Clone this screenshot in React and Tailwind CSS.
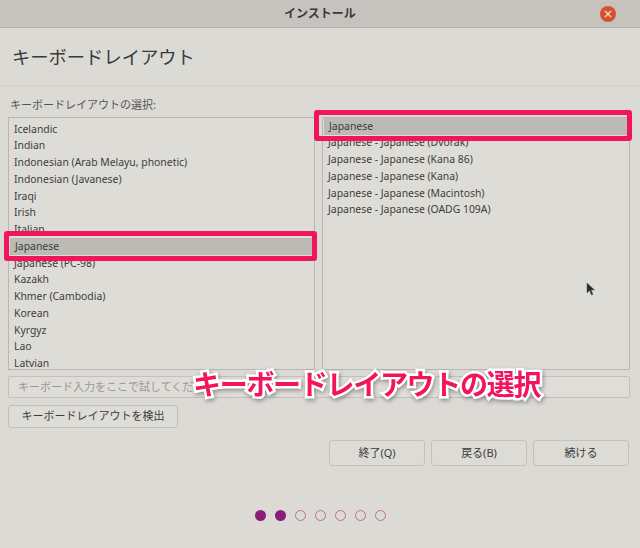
import React from "react";

const leftItems = [
  "Icelandic",
  "Indian",
  "Indonesian (Arab Melayu, phonetic)",
  "Indonesian (Javanese)",
  "Iraqi",
  "Irish",
  "Italian",
  "Japanese",
  "Japanese (PC-98)",
  "Kazakh",
  "Khmer (Cambodia)",
  "Korean",
  "Kyrgyz",
  "Lao",
  "Latvian",
];

const rightItems = [
  "Japanese",
  "Japanese - Japanese (Dvorak)",
  "Japanese - Japanese (Kana 86)",
  "Japanese - Japanese (Kana)",
  "Japanese - Japanese (Macintosh)",
  "Japanese - Japanese (OADG 109A)",
];

function ListBox({ items, selected, className }) {
  return (
    <div className={"h-[253px] border border-[#b9b7b2] bg-[#dedcd7] overflow-hidden " + className}>
      {items.map((item) => (
        <div
          key={item}
          className={
            "h-[16.75px] flex items-center px-[5px] text-[10.4px] text-[#3c3c3c] whitespace-nowrap " +
            (item === selected ? "bg-[#bcbab5] mx-px" : "")
          }
        >
          {item}
        </div>
      ))}
    </div>
  );
}

function Dot({ filled }) {
  return (
    <div
      className={
        "w-[11px] h-[11px] rounded-full " +
        (filled ? "bg-[#8a1c7c]" : "border border-[#c06aa6]")
      }
    />
  );
}

export default function App() {
  return (
    <div className="relative w-[640px] h-[548px] overflow-hidden bg-[#dcdad5] font-['Noto_Sans','Noto_Sans_CJK_JP',sans-serif] text-[#3c3c3c]">
      {/* title bar */}
      <div className="relative h-[28px] flex items-center justify-center bg-[#c6c3be] border-b border-[#b3b0ab]">
        <span className="text-[12px] font-bold text-[#3a3a3a]">インストール</span>
        <div className="absolute right-[24px] top-[6px] w-[16px] h-[16px] rounded-full bg-[#d4532c] flex items-center justify-center">
          <svg width="8" height="8" viewBox="0 0 8 8">
            <path d="M1 1L7 7M7 1L1 7" stroke="#f4d8cc" strokeWidth="1.4" />
          </svg>
        </div>
      </div>

      {/* heading */}
      <div className="px-[12px] pt-[15px] h-[58px] border-b border-[#d2d0cb]">
        <h1 className="text-[18.3px] leading-[28px] text-[#3a3a3a]">キーボードレイアウト</h1>
      </div>

      <div className="px-[8px]">
        <div className="pt-[12px] h-[31px] text-[11px] leading-[14px] text-[#555] pl-[2px]">
          キーボードレイアウトの選択:
        </div>

        <div className="flex gap-[7px]">
          <ListBox items={leftItems} selected="Japanese" className="w-[307px] pt-[3px]" />
          <ListBox items={rightItems} selected="Japanese" className="flex-1 mr-[2px]" />
        </div>

        <div className="mt-[6px] h-[22px] mr-[2px] border border-[#c3c1bc] rounded-[2px] bg-[#dfddd8] flex items-center px-[9px] text-[11px] text-[#9a9894]">
          キーボード入力をここで試してください
        </div>

        <div className="mt-[7px] w-[170px] h-[23px] border border-[#c1bfba] rounded-[3px] bg-[#dedcd7] flex items-center justify-center text-[11px] text-[#3c3c3c]">
          キーボードレイアウトを検出
        </div>

        <div className="mt-[12px] flex justify-end gap-[6px] pr-[3px]">
          {["終了(Q)", "戻る(B)", "続ける"].map((label) => (
            <div
              key={label}
              className="w-[96px] h-[26px] border border-[#c3c1bc] rounded-[3px] bg-[#dddbd6] flex items-center justify-center text-[11px] text-[#3c3c3c]"
            >
              {label}
            </div>
          ))}
        </div>

        <div className="mt-[44px] flex justify-center gap-[9px] pl-[1px]">
          <Dot filled />
          <Dot filled />
          <Dot />
          <Dot />
          <Dot />
          <Dot />
          <Dot />
        </div>
      </div>

      {/* annotation overlays */}
      <div className="absolute left-[4px] top-[231px] w-[313px] h-[30px] border-[5px] border-[#f2145c] rounded-[3px]" />
      <div className="absolute left-[314px] top-[110px] w-[318px] h-[31px] border-[5px] border-[#f2145c] rounded-[3px]" />
      <div className="absolute left-[193px] top-[365px] text-[28px] leading-[38px] font-bold text-[#f2145c] whitespace-nowrap [-webkit-text-stroke:5px_#ffffff] [paint-order:stroke_fill] [filter:drop-shadow(1px_2px_2px_rgba(0,0,0,0.35))] tracking-[-1.3px]">
        キーボードレイアウトの選択
      </div>

      {/* mouse cursor */}
      <svg className="absolute left-[586px] top-[282px]" width="10" height="14" viewBox="0 0 10 14">
        <path d="M1 1L1 11L3.5 8.5L5.5 13L7 12.3L5 8L8.5 8Z" fill="#2a2a2a" stroke="#555" strokeWidth="0.5" />
      </svg>
    </div>
  );
}
